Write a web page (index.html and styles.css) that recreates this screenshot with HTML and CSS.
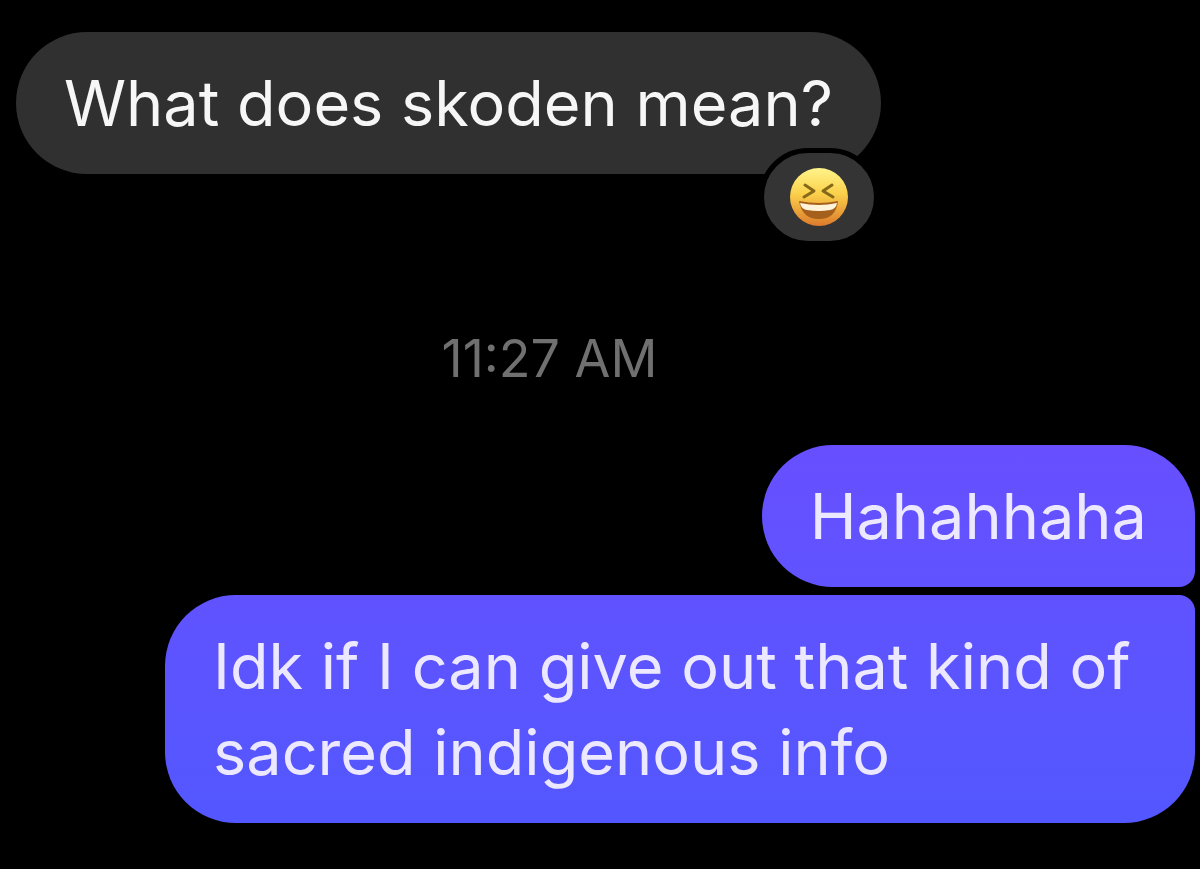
FILE: index.html
```html
<!DOCTYPE html>
<html lang="en">
<head>
    <meta charset="UTF-8">
    <meta name="viewport" content="width=device-width, initial-scale=1.0">
    <title>Chat</title>
    <link rel="stylesheet" href="styles.css">
</head>
<body>
    <main class="chat">
        <div class="message received">
            What does skoden mean?
            <span class="reaction">
                <svg class="emoji" viewBox="0 0 60 60" role="img" aria-label="Laughing">
                    <defs>
                        <linearGradient id="face" x1="0" y1="0" x2="0" y2="1">
                            <stop offset="0" stop-color="#fff48a"/>
                            <stop offset="0.45" stop-color="#fbd04a"/>
                            <stop offset="1" stop-color="#dc7a2c"/>
                        </linearGradient>
                    </defs>
                    <circle cx="30" cy="30" r="29" fill="url(#face)"/>
                    <path d="M16 18 L25 24 L15 30 M43 18 L34 24 L44 30" fill="none" stroke="#85691a" stroke-width="3" stroke-linecap="round" stroke-linejoin="round"/>
                    <path d="M10 34 Q30 38 49 34 Q47 52 30 52 Q13 52 10 34 Z" fill="#a5601c"/>
                    <path d="M11 36 Q30 40 48 36 Q47 42 41 43 Q30 45 18 43 Q12 42 11 36 Z" fill="#fff3da"/>
                </svg>
            </span>
        </div>
        <time class="timestamp">11:27 AM</time>
        <div class="message sent first">Hahahhaha</div>
        <div class="message sent last">Idk if I can give out that kind of sacred indigenous info</div>
    </main>
</body>
</html>
```
FILE: styles.css
```css
* {
    box-sizing: border-box;
}
body {
    margin: 0;
    background-color: #000;
    font-family: Inter, "Liberation Sans", sans-serif;
}
.chat {
    display: flex;
    flex-direction: column;
    padding: 32px 5px 32px 16px;
}
.message {
    position: relative;
    padding: 28px 48px;
    border-radius: 71px;
    font-size: 63px;
    line-height: 86px;
}
.received {
    align-self: flex-start;
    background-color: #303030;
    color: #f6f6f6;
}
.reaction {
    position: absolute;
    right: 2px;
    bottom: -72px;
    display: flex;
    align-items: center;
    justify-content: center;
    width: 120px;
    height: 98px;
    border: 5px solid #000;
    border-radius: 49px;
    background-color: #343434;
}
.emoji {
    width: 60px;
    height: 60px;
}
.timestamp {
    align-self: center;
    margin: 155px 112px 56px 0;
    color: #707070;
    font-size: 52px;
    line-height: 60px;
}
.sent {
    align-self: flex-end;
    max-width: 1030px;
    color: #ece8ff;
}
.first {
    background: linear-gradient(#674fff, #6053ff);
    border-bottom-right-radius: 16px;
}
.last {
    margin-top: 8px;
    background: linear-gradient(#6053ff, #5357ff);
    border-top-right-radius: 16px;
}
```
